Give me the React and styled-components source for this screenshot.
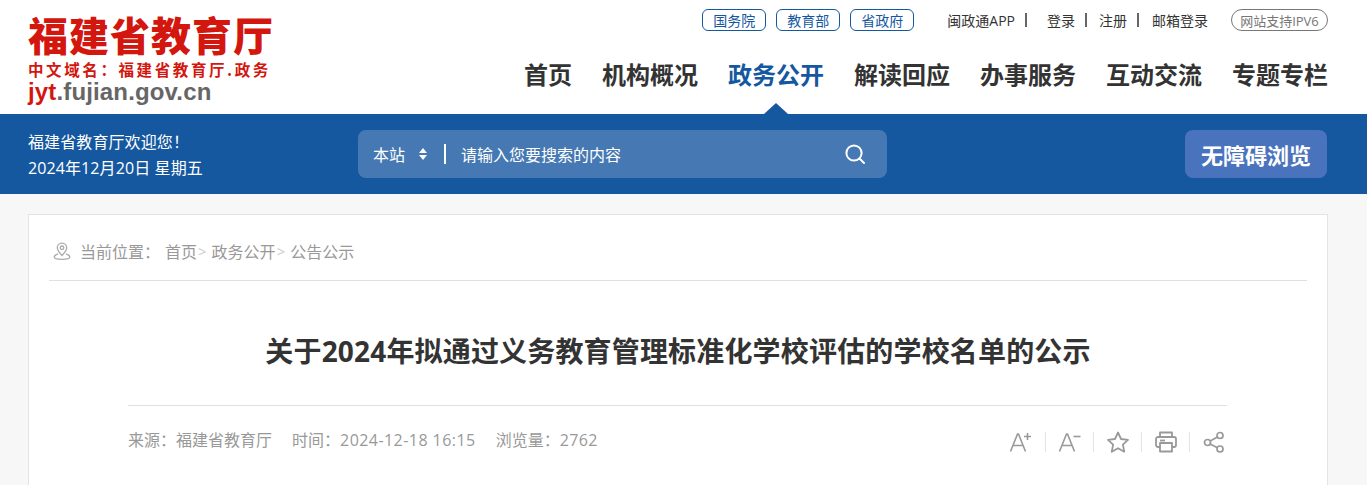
import React from "react";
import styled, { createGlobalStyle } from "styled-components";

const GlobalStyle = createGlobalStyle`
  html, body {
    margin: 0;
    padding: 0;
    height: 485px;
    overflow: hidden;
    background: #f7f7f7;
    font-family: "Open Sans", "Noto Sans CJK SC", sans-serif;
  }
  * { box-sizing: border-box; }
`;

const BLUE = "#15589f";

const Header = styled.header`
  height: 114px;
  background: #fff;
  display: flex;
  justify-content: space-between;
  padding: 0 39px 0 28px;
`;

const Logo = styled.div`
  width: 244px;
  padding-top: 12px;
`;

const LogoTitle = styled.div`
  font-family: "Noto Sans CJK SC", serif;
  font-size: 40px;
  line-height: 44px;
  font-weight: 900;
  letter-spacing: 1px;
  color: #d3170f;
  white-space: nowrap;
`;

const LogoSub = styled.div`
  margin-top: 3px;
  font-family: "Noto Sans CJK SC", sans-serif;
  font-size: 15.5px;
  line-height: 20px;
  font-weight: 700;
  letter-spacing: 2.6px;
  color: #d3170f;
  white-space: nowrap;
`;

const LogoDomain = styled.div`
  margin-top: 1px;
  font-family: "Liberation Sans", sans-serif;
  font-size: 24px;
  line-height: 24px;
  font-weight: 700;
  letter-spacing: 0.15px;
  color: #666;
  span { color: #d3170f; }
`;

const HeaderRight = styled.div`
  display: flex;
  flex-direction: column;
  align-items: flex-end;
`;

const TopBar = styled.div`
  display: flex;
  align-items: center;
  height: 22px;
  margin-top: 9px;
  font-size: 14px;
  color: #333;
`;

const GovLinks = styled.div`
  display: flex;
  gap: 10px;
  margin-right: 33px;
`;

const GovLink = styled.a`
  width: 64px;
  height: 22px;
  border: 1px solid ${BLUE};
  border-radius: 6px;
  color: ${BLUE};
  display: flex;
  align-items: center;
  justify-content: center;
`;

const UserLink = styled.a`
  display: flex;
  align-items: center;
  height: 14px;
  padding-right: ${({ $pad }) => $pad}px;
  margin-right: ${({ $gap }) => $gap}px;
  border-right: ${({ $last }) => ($last ? "none" : "2px solid #666")};
  color: #333;
  white-space: nowrap;
`;

const Ipv6 = styled.span`
  width: 97px;
  height: 22px;
  margin-left: 23px;
  border: 1px solid #777;
  border-radius: 11px;
  color: #777;
  font-size: 13px;
  display: flex;
  align-items: center;
  justify-content: center;
  white-space: nowrap;
`;

const Nav = styled.nav`
  display: flex;
  gap: 30px;
  margin-top: 25px;
`;

const NavItem = styled.a`
  position: relative;
  display: block;
  font-family: "Noto Sans CJK SC", sans-serif;
  font-size: 24px;
  line-height: 36px;
  height: 58px;
  font-weight: 700;
  color: ${({ $active }) => ($active ? BLUE : "#333")};
  white-space: nowrap;

  ${({ $active }) =>
    $active &&
    `&::after {
      content: "";
      position: absolute;
      left: 50%;
      bottom: 0;
      margin-left: -12px;
      border-left: 12px solid transparent;
      border-right: 12px solid transparent;
      border-bottom: 11px solid ${BLUE};
    }`}
`;

const BlueBar = styled.div`
  height: 80px;
  background: ${BLUE};
  display: flex;
  align-items: center;
  padding: 0 40px 0 28px;
  color: #fff;
`;

const Welcome = styled.div`
  width: 330px;
  padding-top: 2px;
  font-size: 16px;
  line-height: 26px;
  letter-spacing: 0.1px;
`;

const SearchBox = styled.div`
  width: 529px;
  height: 48px;
  border-radius: 8px;
  background: #4679b3;
  display: flex;
  align-items: center;
  padding: 0 22px 0 15px;
`;

const ScopeSelect = styled.div`
  width: 73px;
  height: 20px;
  display: flex;
  align-items: center;
  justify-content: space-between;
  padding-right: 16px;
  font-size: 16px;
  border-right: 2px solid #fff;
`;

const Placeholder = styled.span`
  flex: 1;
  margin-left: 15px;
  font-size: 16px;
`;

const AccessButton = styled.a`
  margin-left: auto;
  width: 142px;
  height: 48px;
  border-radius: 8px;
  background: #4a73bd;
  color: #fff;
  font-size: 22px;
  font-weight: 700;
  display: flex;
  align-items: center;
  justify-content: center;
`;

const Main = styled.main`
  width: 1300px;
  height: 291px;
  margin: 20px 0 0 28px;
  padding: 0 20px;
  background: #fff;
  border: 1px solid #e4e4e4;
  border-bottom: none;
`;

const Crumbs = styled.div`
  height: 66px;
  border-bottom: 1px solid #e0e0e0;
  display: flex;
  align-items: center;
  padding: 6px 0 0 3px;
  font-size: 16px;
  color: #999;
  white-space: nowrap;
`;

const CrumbLabel = styled.span`
  margin: 0 5px 0 8px;
`;

const CrumbSep = styled.span`
  margin: 0 5px 0 1px;
  font-size: 15px;
  color: #ccc;
`;

const Title = styled.h1`
  margin: 0;
  height: 124px;
  display: flex;
  align-items: center;
  justify-content: center;
  padding-top: 14px;
  font-size: 28px;
  font-weight: 700;
  letter-spacing: 0.17px;
  color: #333;
  white-space: nowrap;
`;

const MetaRow = styled.div`
  margin: 0 80px 0 79px;
  height: 71px;
  border-top: 1px solid #e0e0e0;
  display: flex;
  align-items: center;
  justify-content: space-between;
  font-size: 16px;
  color: #999;
`;

const MetaText = styled.div`
  display: flex;
  gap: 20px;
  margin-top: -4px;
`;

const MetaValue = styled.span`
  letter-spacing: ${({ $spacing }) => $spacing}px;
`;

const Tools = styled.div`
  display: flex;
  align-items: center;
  margin: 1px 2px 0 0;
`;

const ToolIcon = styled.span`
  width: 48px;
  height: 20px;
  display: flex;
  align-items: center;
  justify-content: center;
  border-left: ${({ $first }) => ($first ? "none" : "1px solid #e4e4e4")};

  &:last-child { width: 36px; justify-content: flex-end; }
`;

const PinIcon = () => (
  <svg width="20" height="20" viewBox="0 0 20 20" fill="none" stroke="#aaa" strokeWidth="1.3">
    <path d="M10 14.5C7.5 11.5 5.3 9.6 5.3 6.8a4.7 4.7 0 0 1 9.4 0c0 2.8-2.2 4.7-4.7 7.7z" />
    <circle cx="10" cy="6.8" r="1.8" />
    <path d="M6 12.8C3.8 13.5 2.2 14.6 2.2 16c0 1.5 2 2.3 7.8 2.3s7.8-.8 7.8-2.3c0-1.4-1.6-2.5-3.8-3.2" />
  </svg>
);

const Updown = () => (
  <svg width="10" height="14" viewBox="0 0 10 14" fill="#fff">
    <path d="M5 1l4 5H1zM5 13L1 8h8z" />
  </svg>
);

const SearchIcon = () => (
  <svg width="20" height="20" viewBox="0 0 20 20" fill="none" stroke="#fff" strokeWidth="2">
    <circle cx="9" cy="9" r="7.6" />
    <path d="M14.5 14.5L19 19" strokeLinecap="round" />
  </svg>
);

const FontIcon = ({ plus }) => (
  <svg width="24" height="22" viewBox="0 0 24 22" fill="none" stroke="#999" strokeWidth="1.6">
    <path d="M1.5 20.5L8.5 3h1l7 17.5M4.2 14.5h9.6" />
    {plus ? <path d="M15 5.5h7M18.5 2v7" /> : <path d="M15.5 5.5h7" />}
  </svg>
);

const StarIcon = () => (
  <svg width="24" height="24" viewBox="0 0 24 24" fill="none" stroke="#999" strokeWidth="1.8" strokeLinejoin="round">
    <path d="M12 2.5l3 6.5 7 .9-5.1 4.8 1.3 7L12 18.2l-6.2 3.5 1.3-7L2 9.9l7-.9z" />
  </svg>
);

const PrintIcon = () => (
  <svg width="22" height="22" viewBox="0 0 22 22" fill="none" stroke="#999" strokeWidth="1.8" strokeLinejoin="round">
    <path d="M5 6V1.5h12V6" />
    <rect x="1" y="6" width="20" height="10" rx="2" />
    <path d="M5 12h12v8.5H5z" fill="#fff" />
    <path d="M5 9.5h5" />
  </svg>
);

const ShareIcon = () => (
  <svg width="22" height="22" viewBox="0 0 22 22" fill="none" stroke="#999" strokeWidth="1.7">
    <circle cx="17" cy="4.5" r="3" />
    <circle cx="4.5" cy="11.5" r="3" />
    <circle cx="17" cy="18" r="3" />
    <path d="M7.2 10l7.2-4M7.2 13l7.2 3.8" />
  </svg>
);

const navItems = ["首页", "机构概况", "政务公开", "解读回应", "办事服务", "互动交流", "专题专栏"];

export default function App() {
  return (
    <>
      <GlobalStyle />
      <Header>
        <Logo>
          <LogoTitle>福建省教育厅</LogoTitle>
          <LogoSub>中文域名：福建省教育厅.政务</LogoSub>
          <LogoDomain>
            <span>jyt</span>.fujian.gov.cn
          </LogoDomain>
        </Logo>
        <HeaderRight>
          <TopBar>
            <GovLinks>
              <GovLink>国务院</GovLink>
              <GovLink>教育部</GovLink>
              <GovLink>省政府</GovLink>
            </GovLinks>
            <UserLink $pad={10} $gap={20}>闽政通APP</UserLink>
            <UserLink $pad={10} $gap={12}>登录</UserLink>
            <UserLink $pad={10} $gap={13}>注册</UserLink>
            <UserLink $last $pad={0} $gap={0}>邮箱登录</UserLink>
            <Ipv6>网站支持IPV6</Ipv6>
          </TopBar>
          <Nav>
            {navItems.map((item) => (
              <NavItem key={item} $active={item === "政务公开"}>{item}</NavItem>
            ))}
          </Nav>
        </HeaderRight>
      </Header>
      <BlueBar>
        <Welcome>
          <div>福建省教育厅欢迎您！</div>
          <div>2024年12月20日 星期五</div>
        </Welcome>
        <SearchBox>
          <ScopeSelect>本站<Updown /></ScopeSelect>
          <Placeholder>请输入您要搜索的内容</Placeholder>
          <SearchIcon />
        </SearchBox>
        <AccessButton>无障碍浏览</AccessButton>
      </BlueBar>
      <Main>
        <Crumbs>
          <PinIcon />
          <CrumbLabel>当前位置：</CrumbLabel>
          首页<CrumbSep>&gt;</CrumbSep>政务公开<CrumbSep>&gt;</CrumbSep>公告公示
        </Crumbs>
        <Title>关于2024年拟通过义务教育管理标准化学校评估的学校名单的公示</Title>
        <MetaRow>
          <MetaText>
            <span>来源：福建省教育厅</span>
            <span>时间：<MetaValue $spacing={0.45}>2024-12-18 16:15</MetaValue></span>
            <span>浏览量：<MetaValue $spacing={0.4}>2762</MetaValue></span>
          </MetaText>
          <Tools>
            <ToolIcon $first><FontIcon plus /></ToolIcon>
            <ToolIcon><FontIcon /></ToolIcon>
            <ToolIcon><StarIcon /></ToolIcon>
            <ToolIcon><PrintIcon /></ToolIcon>
            <ToolIcon><ShareIcon /></ToolIcon>
          </Tools>
        </MetaRow>
      </Main>
    </>
  );
}
